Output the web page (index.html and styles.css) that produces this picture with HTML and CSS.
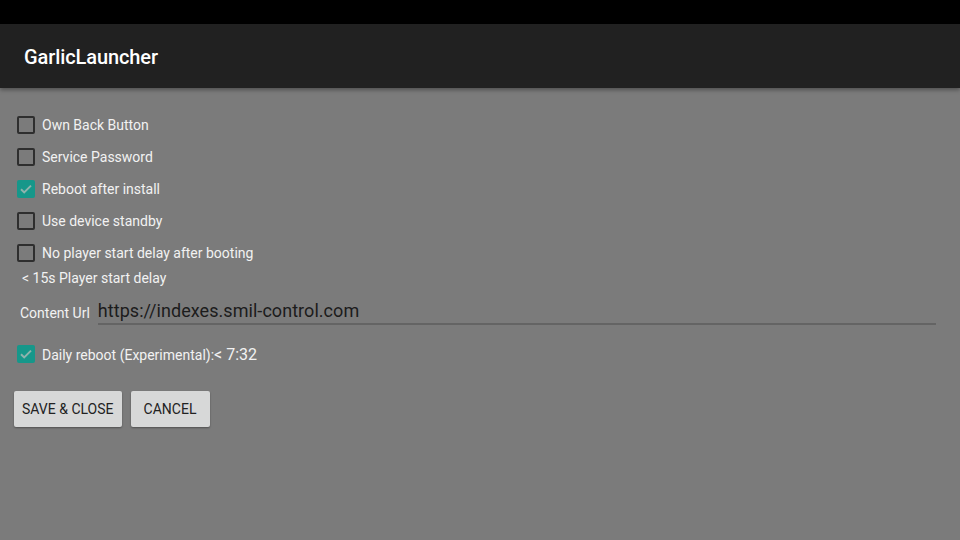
FILE: index.html
```html
<!DOCTYPE html>
<html>
<head>
<meta charset="utf-8">
<link rel="stylesheet" href="styles.css">
</head>
<body>
<div class="status"></div>
<header class="toolbar"><h1 class="title">GarlicLauncher</h1></header>
<main class="content">
  <div class="row"><span class="box"></span><span class="label">Own Back Button</span></div>
  <div class="row"><span class="box"></span><span class="label">Service Password</span></div>
  <div class="row"><span class="box checked"><svg viewBox="0 0 18 18" width="18" height="18"><path d="M4 9.2l3.2 3.2L14 5.6" fill="none" stroke="#8fb3ad" stroke-width="2"/></svg></span><span class="label">Reboot after install</span></div>
  <div class="row"><span class="box"></span><span class="label">Use device standby</span></div>
  <div class="row"><span class="box"></span><span class="label">No player start delay after booting</span></div>
  <div class="delay">&lt; 15s Player start delay</div>
  <div class="url-row">
    <span class="url-label">Content Url</span>
    <div class="url-input">https://indexes.smil-control.com</div>
  </div>
  <div class="row daily"><span class="box checked"><svg viewBox="0 0 18 18" width="18" height="18"><path d="M4 9.2l3.2 3.2L14 5.6" fill="none" stroke="#8fb3ad" stroke-width="2"/></svg></span><span class="label">Daily reboot (Experimental):<span class="time">&lt; 7:32</span></span></div>
  <div class="buttons">
    <button class="btn">SAVE &amp; CLOSE</button>
    <button class="btn cancel">CANCEL</button>
  </div>
</main>
</body>
</html>
```
FILE: styles.css
```css
html, body {
  margin: 0;
  padding: 0;
  width: 960px;
  height: 540px;
  overflow: hidden;
  background: #7b7b7b;
  font-family: Roboto, "Liberation Sans", sans-serif;
}
.status {
  height: 24px;
  background: #000;
}
.toolbar {
  height: 64px;
  background: #212121;
  display: flex;
  align-items: center;
  padding-left: 24px;
  box-shadow: 0 2px 4px rgba(0,0,0,0.35);
  position: relative;
}
.title {
  margin: 0;
  padding-top: 2px;
  font-size: 20px;
  font-weight: 500;
  color: #ffffff;
  letter-spacing: -0.1px;
}
.content {
  padding: 21px 24px 0 14px;
}
.row {
  height: 32px;
  display: flex;
  align-items: center;
}
.box {
  width: 14px;
  height: 14px;
  margin-left: 3px;
  margin-right: 7px;
  border: 2px solid #2e2e2e;
  border-radius: 2px;
  display: flex;
  align-items: center;
  justify-content: center;
}
.box.checked {
  width: 18px;
  height: 18px;
  border: none;
  background: #16978a;
}
.box svg { display: block; }
.label {
  font-size: 14px;
  color: #f2f2f2;
}
.delay {
  height: 19px;
  line-height: 18px;
  font-size: 14px;
  color: #f2f2f2;
  padding-left: 8px;
}
.url-row {
  margin-top: 11px;
  display: flex;
  align-items: center;
  padding-left: 6px;
}
.url-label {
  font-size: 14px;
  color: #f2f2f2;
  margin-right: 8px;
  padding-top: 1px;
}
.url-input {
  flex: 1;
  font-size: 18px;
  line-height: 24px;
  color: #1c1c1c;
  border-bottom: 2px solid #646464;
  letter-spacing: 0.05px;
}
.daily {
  margin-top: 13px;
}
.time {
  font-size: 16px;
}
.buttons {
  margin-top: 21px;
  display: flex;
  gap: 9px;
}
.btn {
  height: 36px;
  padding: 0 8px;
  min-width: 79px;
  border: none;
  border-radius: 2px;
  background: #d7d8d8;
  color: #222;
  font-family: Roboto, "Liberation Sans", sans-serif;
  font-size: 14px;
  font-weight: 400;
  box-shadow: 0 1px 2px rgba(0,0,0,0.35);
}
```
